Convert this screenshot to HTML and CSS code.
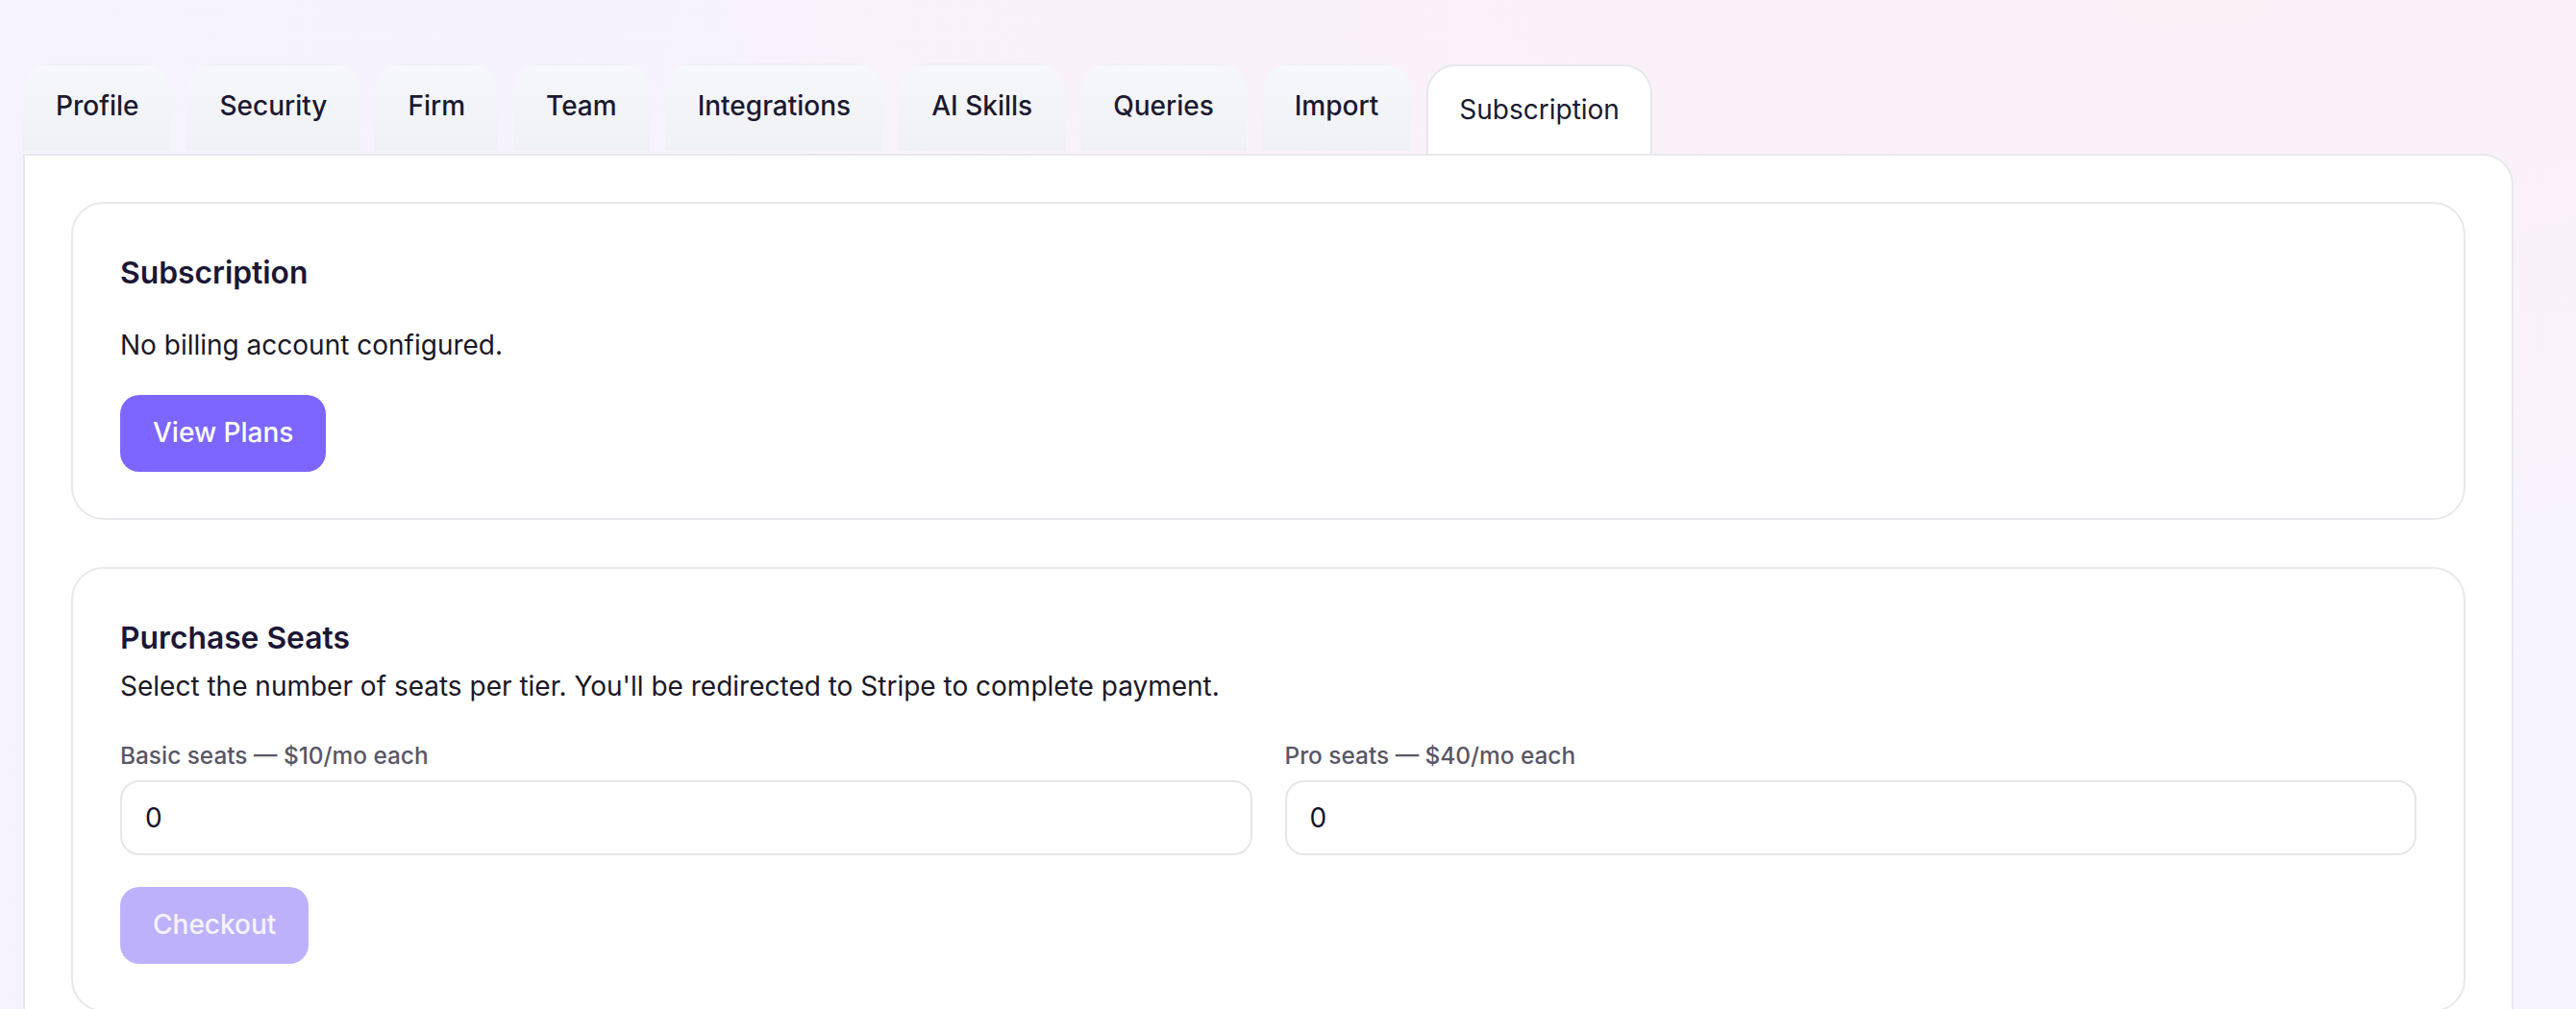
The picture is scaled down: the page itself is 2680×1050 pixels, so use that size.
FILE: index.html
```html
<!DOCTYPE html>
<html lang="en">
<head>
<meta charset="utf-8">
<title>Settings — Subscription</title>
<link rel="stylesheet" href="styles.css">
</head>
<body>
<div class="page">
  <nav class="tabs">
    <div class="tab">Profile</div>
    <div class="tab">Security</div>
    <div class="tab">Firm</div>
    <div class="tab">Team</div>
    <div class="tab">Integrations</div>
    <div class="tab">AI Skills</div>
    <div class="tab">Queries</div>
    <div class="tab">Import</div>
    <div class="tab tab-active">Subscription</div>
  </nav>
  <main class="panel">
    <section class="card">
      <h2 class="card-title title-spaced">Subscription</h2>
      <p class="text">No billing account configured.</p>
      <button class="btn btn-primary">View Plans</button>
    </section>
    <section class="card">
      <h2 class="card-title">Purchase Seats</h2>
      <p class="text">Select the number of seats per tier. You'll be redirected to Stripe to complete payment.</p>
      <div class="seat-grid">
        <label class="field">
          <span class="field-label">Basic seats — $10/mo each</span>
          <input class="input" type="text" value="0">
        </label>
        <label class="field">
          <span class="field-label">Pro seats — $40/mo each</span>
          <input class="input" type="text" value="0">
        </label>
      </div>
      <button class="btn btn-disabled" disabled>Checkout</button>
    </section>
  </main>
</div>
</body>
</html>
```

FILE: styles.css
```css
* { box-sizing: border-box; }

html, body {
  margin: 0;
  height: 100%;
}

body {
  font-family: Inter, "Noto Sans", "Liberation Sans", sans-serif;
  color: #1a1726;
  background:
    radial-gradient(ellipse 60% 55% at 85% 0%, #fcf0f7 0%, rgba(252, 240, 247, 0) 100%),
    linear-gradient(100deg, #f6f3fc 0%, #f8f2fb 60%, #f7f3fc 100%);
  overflow: hidden;
}

.page {
  padding: 66px 65px 0 24px;
}

.tabs {
  display: flex;
  align-items: flex-end;
  gap: 16px;
  height: 94px;
}

.tab {
  height: 91px;
  margin-bottom: 3px;
  padding: 22px 32px 0;
  border: 2px solid transparent;
  border-bottom: 0;
  border-radius: 30px 30px 0 0;
  background: linear-gradient(180deg, #f6f7fb 0%, #f0f1f5 100%);
  font-size: 28px;
  font-weight: 500;
  line-height: 41px;
  color: #1b1930;
  white-space: nowrap;
}

.tab-active {
  height: 93px;
  margin-bottom: 0;
  padding-top: 25px;
  background: #ffffff;
  border-color: #e7e7ec;
  font-weight: 400;
  color: #1a1a30;
}

.panel {
  background: #ffffff;
  border: 2px solid #e8e8ec;
  border-radius: 0 32px 32px 32px;
  padding: 48px;
  display: flex;
  flex-direction: column;
  gap: 49px;
  min-height: 1000px;
}

.card {
  border: 2px solid #e8e8ec;
  border-radius: 34px;
  padding: 48px 49px;
}

.card-title {
  margin: 0 0 6px;
  font-size: 31.8px;
  line-height: 47.8px;
  font-weight: 600;
  color: #1c1636;
}

.title-spaced {
  margin-bottom: 31px;
}

.text {
  margin: 0;
  font-size: 28px;
  line-height: 41px;
  color: #1a1726;
}

.btn {
  display: block;
  border: 0;
  border-radius: 20px;
  padding: 19.5px 34px;
  font-family: inherit;
  font-size: 28px;
  line-height: 41px;
  font-weight: 500;
  color: #ffffff;
  cursor: pointer;
}

.btn-primary {
  margin-top: 31px;
  background: #7c66ff;
}

.btn-disabled {
  margin-top: 33px;
  background: #bdb1fc;
  color: #f5f3ff;
  cursor: default;
}

.seat-grid {
  margin-top: 34px;
  display: grid;
  grid-template-columns: 1fr 1fr;
  gap: 34px;
}

.field {
  display: flex;
  flex-direction: column;
}

.field-label {
  font-size: 24.4px;
  line-height: 34.2px;
  font-weight: 500;
  color: #595667;
  margin-bottom: 9px;
}

.input {
  height: 78px;
  border: 2px solid #e6e6ea;
  border-radius: 20px;
  padding: 0 24px;
  font-family: inherit;
  font-size: 28px;
  color: #14122a;
  background: #ffffff;
  outline: none;
  width: 100%;
}
```
